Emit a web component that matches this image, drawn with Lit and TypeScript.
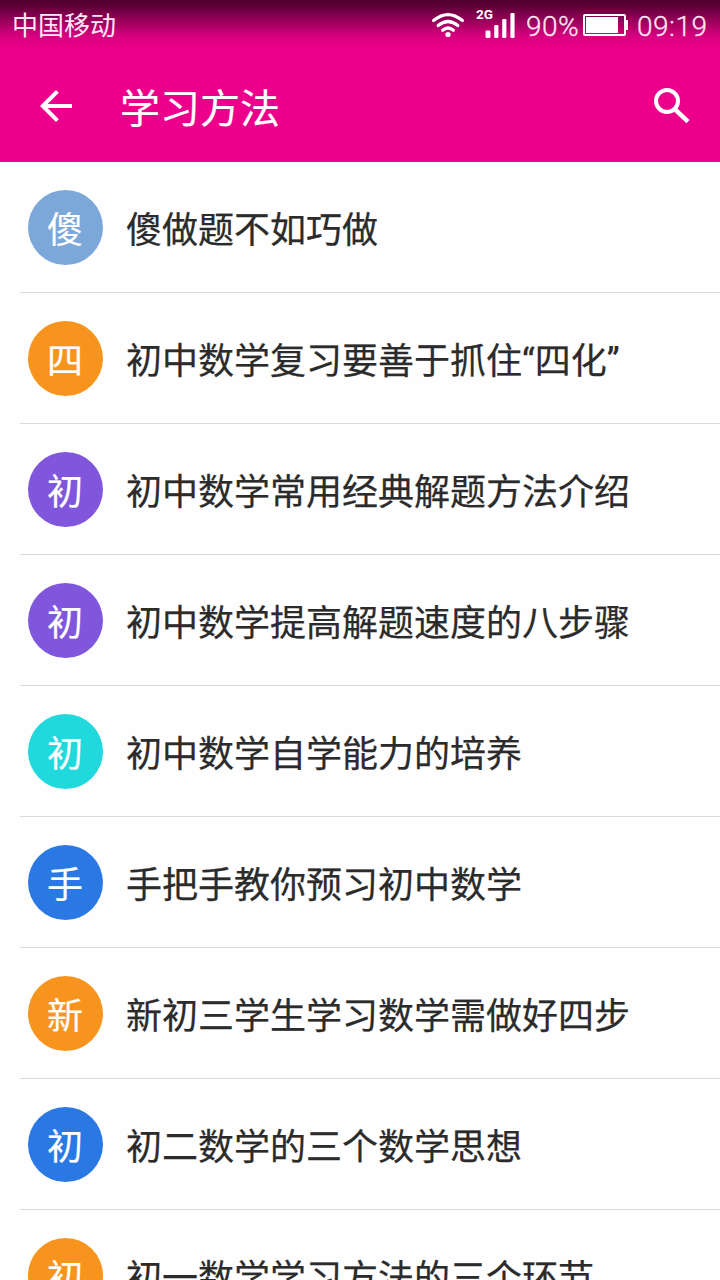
import { LitElement, html, css } from "lit";
import { customElement } from "lit/decorators.js";
import { styleMap } from "lit/directives/style-map.js";

interface Article {
  mark: string;
  color: string;
  title: string;
}

const ARTICLES: Article[] = [
  { mark: "傻", color: "#7ba7d9", title: "傻做题不如巧做" },
  { mark: "四", color: "#f7941d", title: "初中数学复习要善于抓住“四化”" },
  { mark: "初", color: "#8057dc", title: "初中数学常用经典解题方法介绍" },
  { mark: "初", color: "#8057dc", title: "初中数学提高解题速度的八步骤" },
  { mark: "初", color: "#21d9dc", title: "初中数学自学能力的培养" },
  { mark: "手", color: "#2a78e4", title: "手把手教你预习初中数学" },
  { mark: "新", color: "#f7941d", title: "新初三学生学习数学需做好四步" },
  { mark: "初", color: "#2a78e4", title: "初二数学的三个数学思想" },
  { mark: "初", color: "#f7941d", title: "初一数学学习方法的三个环节" },
];

@customElement("status-bar")
class StatusBar extends LitElement {
  static styles = css`
    :host {
      display: flex;
      align-items: center;
      height: 50px;
      padding: 0 12px;
      color: #ffe6f5;
      font-size: 28px;
      line-height: 50px;
    }
    .carrier {
      flex: 1;
      padding-top: 2px;
      font-size: 26px;
    }
    svg {
      display: block;
      flex: none;
    }
    .wifi {
      margin-right: 11px;
    }
    .signal {
      margin-right: 11px;
    }
    .label {
      font: 700 13px Roboto, sans-serif;
    }
    .percent,
    .time {
      padding-top: 4px;
      white-space: nowrap;
      font-weight: 300;
      letter-spacing: 0.5px;
      -webkit-text-stroke: 0.3px #ffe6f5;
    }
    .percent {
      width: 57px;
    }
    .time {
      width: 71px;
      margin-left: 9px;
    }
  `;

  render() {
    return html`
      <span class="carrier">中国移动</span>
      <svg class="wifi" width="34" height="50" viewBox="0 0 34 50" fill="none" stroke="#fff" stroke-width="3.2" stroke-linecap="round">
        <path d="M2.6 20.6Q17 8.6 31.4 20.6M7.2 25.6Q17 17.4 26.8 25.6M11.6 30.2Q17 25.8 22.4 30.2" />
        <circle cx="17" cy="34.5" r="2.6" fill="#fff" stroke="none" />
      </svg>
      <svg class="signal" width="39" height="50" viewBox="0 0 39 50" fill="#fff">
        <text class="label" x="0" y="19" textLength="17" lengthAdjust="spacingAndGlyphs">2G</text>
        <rect x="9.5" y="30.5" width="5" height="7.5" rx="1.2" />
        <rect x="18.2" y="25" width="4.2" height="13" rx="1.2" />
        <rect x="26.2" y="19" width="4.2" height="19" rx="1.2" />
        <rect x="34.4" y="13" width="4.2" height="25" rx="1.2" />
      </svg>
      <span class="percent">90%</span>
      <svg width="45" height="50" viewBox="0 0 45 50">
        <rect x="1" y="15" width="41" height="20" rx="1" fill="none" stroke="#fff" stroke-width="2" />
        <rect x="3" y="17" width="32" height="16" fill="#fff" />
        <rect x="43" y="20" width="2" height="10" fill="#fff" />
      </svg>
      <span class="time">09:19</span>
    `;
  }
}

@customElement("title-bar")
class TitleBar extends LitElement {
  static styles = css`
    :host {
      display: flex;
      align-items: center;
      height: 112px;
      padding: 0 30px 0 39px;
      color: #fff;
    }
    svg {
      display: block;
      flex: none;
    }
    .title {
      flex: 1;
      margin-left: 47px;
      padding-top: 7px;
      font-size: 40px;
      line-height: 105px;
      -webkit-text-stroke: 0.2px #fff;
    }
  `;

  render() {
    return html`
      <svg width="34" height="112" viewBox="0 0 34 112" fill="none" stroke="#fff" stroke-width="4">
        <path d="M33 56H4M18.4 41.4L3.8 56L18.4 70.6" />
      </svg>
      <span class="title">学习方法</span>
      <svg width="37" height="112" viewBox="0 0 37 112" fill="none" stroke="#fff" stroke-width="4">
        <circle cx="14" cy="51" r="11" />
        <path d="M22 59.4L35 71.6" stroke-width="4.6" />
      </svg>
    `;
  }
}

@customElement("article-row")
class ArticleRow extends LitElement {
  static properties = { article: { attribute: false } };
  declare article: Article;

  static styles = css`
    :host {
      display: flex;
      align-items: center;
      box-sizing: border-box;
      height: 131px;
      margin-left: 20px;
      padding: 1px 0 0 8px;
      border-bottom: 1px solid #dadada;
    }
    .mark {
      flex: none;
      box-sizing: border-box;
      width: 75px;
      height: 75px;
      padding: 4px 1px 0 0;
      border-radius: 50%;
      color: #fff;
      font-size: 36px;
      line-height: 75px;
      text-align: center;
      -webkit-text-stroke: 0.2px #fff;
    }
    .name {
      margin-left: 23px;
      padding-top: 7px;
      color: #2b2b2b;
      font-size: 36px;
      line-height: 75px;
      white-space: nowrap;
      -webkit-text-stroke: 0.25px #2b2b2b;
    }
  `;

  render() {
    const { mark, color, title } = this.article;
    return html`
      <div class="mark" style=${styleMap({ backgroundColor: color })}>${mark}</div>
      <div class="name">${title}</div>
    `;
  }
}

@customElement("app-root")
class AppRoot extends LitElement {
  static styles = css`
    :host {
      display: block;
      height: 1280px;
      overflow: hidden;
      background: #fefefe;
      font-family: Roboto, "Noto Sans CJK SC", sans-serif;
    }
    .header {
      height: 162px;
      background: linear-gradient(#50002f 0, #5d0037 6px, #a20060 23px, #d8007f 36px, #ec008b 50px);
    }
  `;

  render() {
    return html`
      <div class="header">
        <status-bar></status-bar>
        <title-bar></title-bar>
      </div>
      ${ARTICLES.map((a) => html`<article-row .article=${a}></article-row>`)}
    `;
  }
}
